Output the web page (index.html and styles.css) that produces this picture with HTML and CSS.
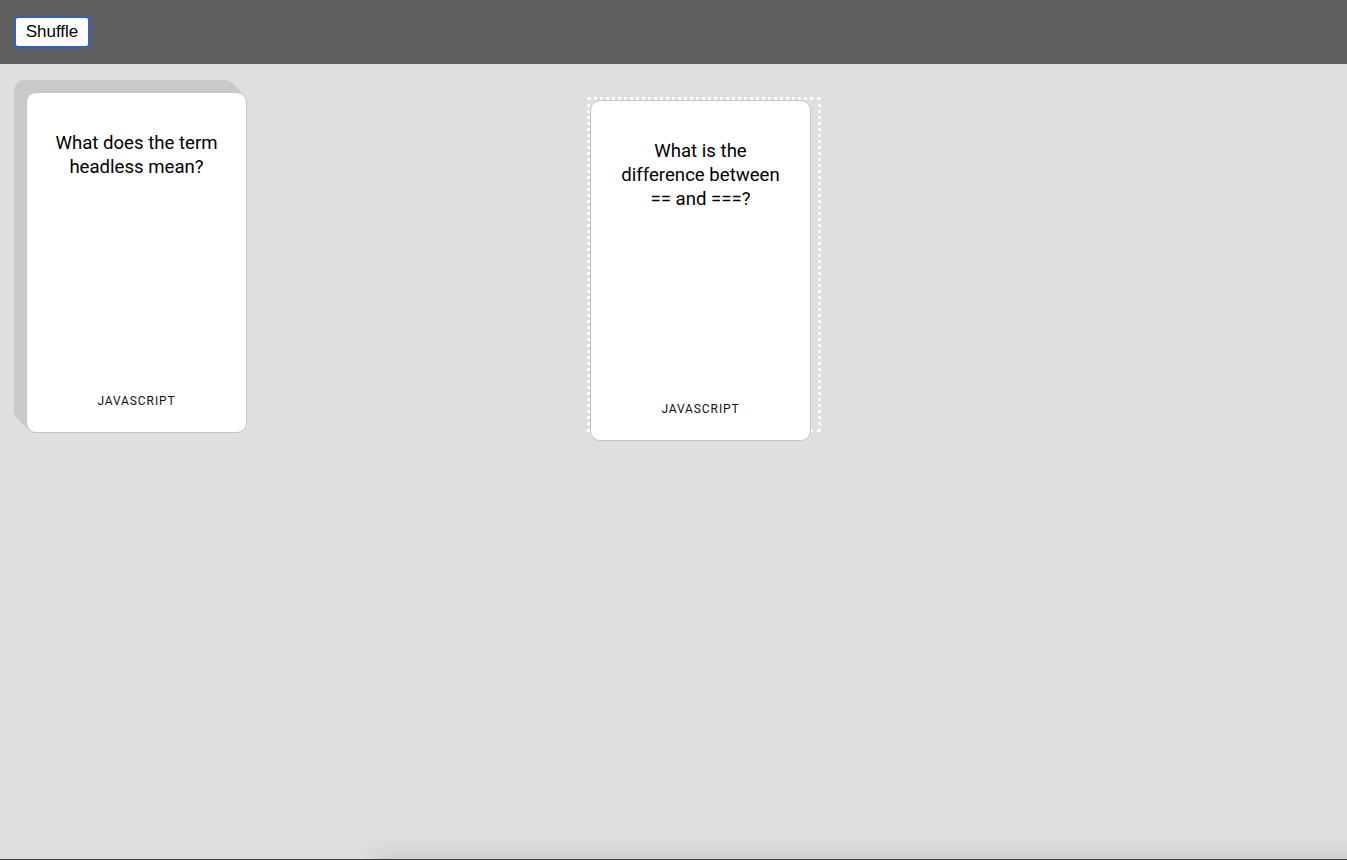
FILE: index.html
```html
<!DOCTYPE html>
<html lang="en">
<head>
<meta charset="utf-8">
<title>Flashcards</title>
<link rel="stylesheet" href="styles.css">
</head>
<body>
<header class="toolbar">
  <button class="shuffle-btn" type="button">Shuffle</button>
</header>
<main class="table">
  <section class="deck">
    <article class="card card--stacked">
      <p class="card-question">What does the term headless mean?</p>
      <p class="card-category">JavaScript</p>
    </article>
  </section>
  <section class="dropzone">
    <article class="card">
      <p class="card-question">What is the difference between == and ===?</p>
      <p class="card-category">JavaScript</p>
    </article>
  </section>
</main>
<div class="edge-shadow"></div>
</body>
</html>
```

FILE: styles.css
```css
* { box-sizing: border-box; }

html, body {
  margin: 0;
  height: 100%;
}

body {
  background: #dfdfdf;
  font-family: Roboto, "Liberation Sans", Arial, sans-serif;
  color: #000;
  overflow: hidden;
  border-bottom: 1px solid #3a3a3a;
  position: relative;
}

.toolbar {
  height: 64px;
  background: #5e5e5e;
  display: flex;
  align-items: center;
  padding: 0 14px 1px;
}

.shuffle-btn {
  width: 76px;
  height: 32px;
  background: #fff;
  border: 2px solid #2f5fc9;
  border-radius: 4px;
  box-shadow: inset 0 0 0 1px #fff;
  font-family: "Liberation Sans", Arial, sans-serif;
  font-size: 17px;
  color: #000;
  padding: 0;
  cursor: pointer;
}

.table {
  display: flex;
  align-items: flex-start;
  padding: 16px 14px;
}

.deck {
  width: 233px;
  height: 352px;
  padding: 12px 0 0 12px;
}

.dropzone {
  margin-left: 340px;
  margin-top: 17px;
  width: 234px;
  height: 335px;
  border: 3px dotted #ffffff;
}

.card {
  width: 221px;
  height: 341px;
  background: #fff;
  border: 1px solid #c4c4c4;
  border-radius: 10px;
  display: flex;
  flex-direction: column;
  align-items: center;
  justify-content: space-between;
  padding: 38px 20px 23px;
  text-align: center;
}

.card--stacked {
  box-shadow:
    -1px -1px 0 #c8c8c8,
    -2px -2px 0 #cacaca,
    -3px -3px 0 #c8c8c8,
    -4px -4px 0 #cacaca,
    -5px -5px 0 #c8c8c8,
    -6px -6px 0 #cacaca,
    -7px -7px 0 #c8c8c8,
    -8px -8px 0 #cacaca,
    -9px -9px 0 #c8c8c8,
    -10px -10px 0 #cacaca,
    -11px -11px 0 #c8c8c8,
    -12px -12px 0 #cacaca;
}

.card-question {
  margin: 0;
  font-size: 18.6px;
  line-height: 24px;
}

.card-category {
  margin: 0;
  font-size: 12px;
  line-height: 16px;
  letter-spacing: 0.9px;
  text-transform: uppercase;
  color: #111;
}

.edge-shadow {
  position: absolute;
  left: 380px;
  right: -40px;
  top: 100%;
  height: 40px;
  box-shadow: 0 0 22px 6px rgba(0, 0, 0, 0.09);
  pointer-events: none;
}
```
